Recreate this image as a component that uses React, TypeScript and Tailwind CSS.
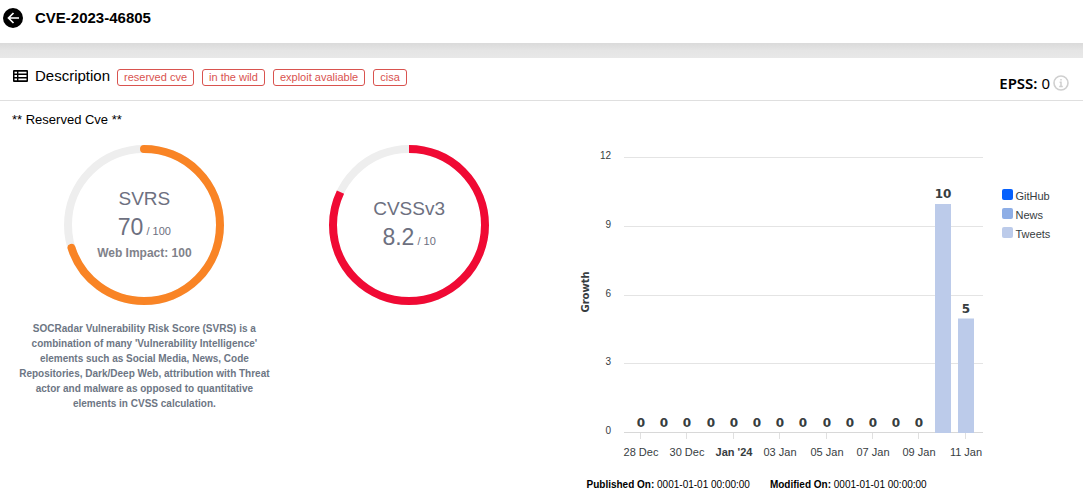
import type { ReactNode } from "react";

const tags = ["reserved cve", "in the wild", "exploit avaliable", "cisa"];

const legend = [
  { label: "GitHub", color: "bg-[#0560fd]" },
  { label: "News", color: "bg-[#8eaee6]" },
  { label: "Tweets", color: "bg-[#bccbea]" },
];

const days = [
  { label: "28 Dec", tweets: 0 },
  { label: "", tweets: 0 },
  { label: "30 Dec", tweets: 0 },
  { label: "", tweets: 0 },
  { label: "Jan '24", tweets: 0 },
  { label: "", tweets: 0 },
  { label: "03 Jan", tweets: 0 },
  { label: "", tweets: 0 },
  { label: "05 Jan", tweets: 0 },
  { label: "", tweets: 0 },
  { label: "07 Jan", tweets: 0 },
  { label: "", tweets: 0 },
  { label: "09 Jan", tweets: 0 },
  { label: "", tweets: 10 },
  { label: "11 Jan", tweets: 5 },
];

type GaugeProps = {
  ratio: number;
  color: string;
  rounded?: boolean;
  children: ReactNode;
};

const Gauge = ({ ratio, color, rounded, children }: GaugeProps) => {
  const length = 2 * Math.PI * 76;

  return (
    <div className="grid size-40 place-items-center">
      <svg viewBox="0 0 160 160" className="col-start-1 row-start-1 size-40 -rotate-90" fill="none" strokeWidth="8">
        <circle cx="80" cy="80" r="76" stroke="#eeeeee" />
        <circle
          cx="80"
          cy="80"
          r="76"
          stroke={color}
          strokeLinecap={rounded ? "round" : "butt"}
          strokeDasharray={`${length * ratio} ${length}`}
        />
      </svg>
      <div className="col-start-1 row-start-1 text-center text-[#6d7080]">{children}</div>
    </div>
  );
};

const GrowthChart = () => {
  const base = 288;
  const unit = 22.9;

  return (
    <svg viewBox="0 0 404 320" className="w-[404px] min-w-0 shrink" fill="#373d3f">
      {[0, 3, 6, 9, 12].map((value) => (
        <g key={value}>
          <line
            x1="44"
            x2="403"
            y1={Math.round(base - value * unit) - 0.5}
            y2={Math.round(base - value * unit) - 0.5}
            stroke={value === 0 ? "#d8d8d8" : "#e4e4e4"}
          />
          <text x="31" y={Math.round(base - value * unit) + 1} fontSize="10" textAnchor="end">
            {value}
          </text>
        </g>
      ))}
      <text
        transform="translate(9 147) rotate(-90)"
        fontSize="10"
        fontWeight="bold"
        textAnchor="middle"
        className="font-['DejaVu_Sans']"
      >
        Growth
      </text>
      {days.map((day, i) => {
        const x = Math.round(61 + i * 23.2);
        const top = base - day.tweets * unit;
        return (
          <g key={i} textAnchor="middle">
            {day.tweets > 0 && <rect x={x - 8} y={top} width="16" height={base - top} fill="#bccbea" />}
            <text x={x} y={top - 6} fontSize="12" fontWeight="bold" className="font-['DejaVu_Sans']">
              {day.tweets}
            </text>
            {day.label && (
              <>
                <line x1={x - 0.5} x2={x - 0.5} y1="288" y2="294" stroke="#e0e0e0" />
                <text x={x} y="311" fontSize="11" fontWeight={day.label.includes("'") ? "bold" : "normal"}>
                  {day.label}
                </text>
              </>
            )}
          </g>
        );
      })}
    </svg>
  );
};

const App = () => {
  return (
    <div className="min-h-screen bg-white font-['Liberation_Sans',Arial,sans-serif] text-black">
      {/* Page title */}
      <header className="flex h-[43px] items-center gap-3 px-[3px] pb-2">
        <button type="button" aria-label="Back">
          <svg viewBox="0 0 20 20" className="size-5" fill="none">
            <circle cx="10" cy="10" r="10" fill="black" />
            <path d="M16 10H6M10.5 5L5.5 10L10.5 15" stroke="white" strokeWidth="1.7" />
          </svg>
        </button>
        <h1 className="text-[15px] leading-5 font-bold">CVE-2023-46805</h1>
      </header>
      <div className="h-[15px] bg-linear-to-b from-[#dadada] via-[#e5e5e5] to-[#e8e8e8]" />

      <main>
        {/* Card header */}
        <div className="flex h-[43px] items-center justify-between border-b border-[#dfdfdf] pr-[14px] pl-[13px]">
          <div className="flex items-center gap-[7px] pb-[6px]">
            <svg viewBox="0 0 15 12" className="h-3 w-[15px]">
              <path
                fillRule="evenodd"
                d="M1 0H14Q15 0 15 1V11Q15 12 14 12H1Q0 12 0 11V1Q0 0 1 0ZM1.5 1.8V3.6H4V1.8ZM5.4 1.8V3.6H13.5V1.8ZM1.5 5V7H4V5ZM5.4 5V7H13.5V5ZM1.5 8.4V10.2H4V8.4ZM5.4 8.4V10.2H13.5V8.4Z"
              />
            </svg>
            <h2 className="text-[15px] leading-5">Description</h2>
            <ul className="flex gap-2 pt-[2px]">
              {tags.map((tag) => (
                <li
                  key={tag}
                  className="rounded-[3px] border border-[#d9534f] px-[6px] text-[11px] leading-[15px] text-[#d9534f]"
                >
                  {tag}
                </li>
              ))}
            </ul>
          </div>
          <div className="flex items-center gap-[3px] pt-[7px] font-['Noto_Sans'] text-[15px] leading-5">
            <p>
              <span className="font-semibold">EPSS:</span> 0
            </p>
            <svg viewBox="0 0 16 16" className="size-4" fill="none" stroke="#cfcfcf">
              <circle cx="8" cy="8" r="7" strokeWidth="1.6" />
              <path d="M8 4V5.6M6.6 7.2H8V11.5M6.2 11.5H9.8" strokeWidth="1.5" />
            </svg>
          </div>
        </div>

        {/* Card body */}
        <div className="flex">
          <section className="w-1/2 pl-3">
            <p className="pt-[9px] text-[13px] leading-5">** Reserved Cve **</p>
            <div className="grid grid-cols-2 pt-[15px]">
              <div className="flex flex-col items-center">
                <Gauge ratio={0.7} color="#f98425" rounded>
                  <p className="text-[19px] leading-6">SVRS</p>
                  <p className="text-[23px] leading-8">
                    70<span className="text-[11px]"> / 100</span>
                  </p>
                  <p className="pb-1 text-xs leading-3 font-bold text-[#7f828a]">Web Impact: 100</p>
                </Gauge>
                <p className="px-1 pt-4 text-center text-[10px] leading-[15px] font-bold text-[#6d7684]">
                  SOCRadar Vulnerability Risk Score (SVRS) is a combination of many 'Vulnerability Intelligence'
                  elements such as Social Media, News, Code Repositories, Dark/Deep Web, attribution with Threat
                  actor and malware as opposed to quantitative elements in CVSS calculation.
                </p>
              </div>
              <div className="flex flex-col items-center">
                <Gauge ratio={0.82} color="#f00a34">
                  <p className="pt-1 text-[19px] leading-6">CVSSv3</p>
                  <p className="text-[23px] leading-8">
                    8.2<span className="text-[11px]"> / 10</span>
                  </p>
                </Gauge>
              </div>
            </div>
          </section>

          <section className="w-1/2 pt-11 pl-[38px]">
            <div className="flex gap-[18px]">
              <GrowthChart />
              <ul className="shrink-0 pt-[42px] text-[11px] leading-[19px] text-[#373d3f]">
                {legend.map((item) => (
                  <li key={item.label} className="flex items-center gap-[3px]">
                    <span className={`mb-1 size-[11px] rounded-[2px] ${item.color}`} />
                    {item.label}
                  </li>
                ))}
              </ul>
            </div>
            <div className="flex gap-5 pt-[13px] pl-[7px] text-[10px] leading-[14px]">
              <p>
                <span className="font-bold">Published On:</span> 0001-01-01 00:00:00
              </p>
              <p>
                <span className="font-bold">Modified On:</span> 0001-01-01 00:00:00
              </p>
            </div>
          </section>
        </div>
      </main>
    </div>
  );
};

export default App;
